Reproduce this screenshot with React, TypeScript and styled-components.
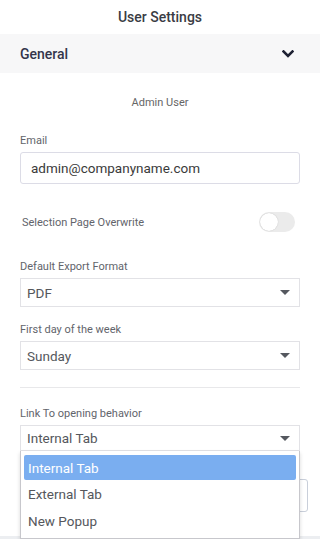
import React from 'react';
import styled, { createGlobalStyle } from 'styled-components';

const GlobalStyle = createGlobalStyle`
  html, body {
    margin: 0;
    padding: 0;
    background: #ffffff;
  }
  body {
    font-family: Roboto, "Liberation Sans", sans-serif;
    color: #333;
  }
`;

const Page = styled.div`
  width: 320px;
  height: 539px;
  display: flex;
  flex-direction: column;
  overflow: hidden;
  background: #ffffff;
`;

const TitleBar = styled.div`
  height: 34px;
  display: flex;
  align-items: center;
  justify-content: center;
  font-size: 14px;
  font-weight: 500;
  color: #3a3c44;
`;

const SectionHeader = styled.div`
  height: 39px;
  display: flex;
  align-items: center;
  justify-content: space-between;
  padding: 0 26px 0 20px;
  background: #f7f7f8;
  font-size: 14px;
  font-weight: 500;
  color: #33354a;
`;

const Body = styled.div`
  flex: 1;
  padding: 22px 20px 0;
  display: flex;
  flex-direction: column;
`;

const UserName = styled.div`
  text-align: center;
  font-size: 11px;
  line-height: 15px;
  color: #666;
  margin-bottom: 23px;
`;

const Field = styled.div<{ $gap?: number }>`
  display: flex;
  flex-direction: column;
  margin-bottom: ${(p) => p.$gap ?? 0}px;
  position: relative;
`;

const Label = styled.div`
  font-size: 11px;
  line-height: 15px;
  color: #62646b;
  margin-bottom: 4px;
`;

const TextInput = styled.div`
  height: 32px;
  box-sizing: border-box;
  border: 1px solid #dcdce6;
  border-radius: 3px;
  padding: 0 10px;
  display: flex;
  align-items: center;
  font-size: 13.5px;
  color: #3a3a3a;
`;

const ToggleRow = styled.div`
  height: 20px;
  display: flex;
  align-items: center;
  justify-content: space-between;
  padding: 0 5px 0 2px;
  margin: 28px 0 27px;
  font-size: 11px;
  color: #62646b;
`;

const Toggle = styled.div`
  width: 36px;
  height: 20px;
  border-radius: 10px;
  background: #ebebeb;
  display: flex;
  align-items: center;
  padding: 0 1px;
  box-sizing: border-box;
`;

const Knob = styled.div`
  width: 18px;
  height: 18px;
  border-radius: 50%;
  background: #fff;
  box-shadow: 0 0 1px rgba(0, 0, 0, 0.25);
`;

const Select = styled.div<{ $h?: number }>`
  height: ${(p) => p.$h ?? 29}px;
  box-sizing: border-box;
  border: 1px solid #e2e2e6;
  padding: 0 8px 0 6px;
  display: flex;
  align-items: center;
  justify-content: space-between;
  font-size: 13.5px;
  color: #55575c;
`;

const Caret = styled.span`
  width: 0;
  height: 0;
  border-left: 5px solid transparent;
  border-right: 5px solid transparent;
  border-top: 5px solid #55585f;
  margin-right: 1px;
`;

const Divider = styled.div`
  height: 1px;
  background: #e8e8ea;
  margin: 17px 0 18px;
`;

const ButtonRow = styled.div`
  display: flex;
  justify-content: flex-end;
  margin: 28px -8px 0 0;
`;

const SaveButton = styled.div`
  width: 90px;
  height: 33px;
  box-sizing: border-box;
  border: 1px solid #c9cfda;
  border-radius: 3px;
  display: flex;
  align-items: center;
  justify-content: center;
  font-size: 13px;
  color: #444;
`;

const Footer = styled.div`
  height: 3px;
  background: #eceef1;
`;

const Menu = styled.div`
  position: absolute;
  top: 100%;
  left: 0;
  right: 0;
  background: #fff;
  border: 1px solid #c7c7cc;
  border-top: none;
  box-shadow: 0 2px 4px rgba(0, 0, 0, 0.15);
  padding: 4px 3px 4px;
  z-index: 5;
`;

const MenuItem = styled.div<{ $active?: boolean }>`
  height: ${(p) => (p.$active ? 25 : 27)}px;
  display: flex;
  align-items: center;
  padding: 0 4px;
  border-radius: 2px;
  font-size: 13.5px;
  background: ${(p) => (p.$active ? '#7aaef0' : 'transparent')};
  color: ${(p) => (p.$active ? '#ffffff' : '#55575c')};
`;

const Chevron = () => (
  <svg width="12" height="8" viewBox="0 0 12 8">
    <polyline points="1.5,1.5 6,6 10.5,1.5" fill="none" stroke="#1e2133" strokeWidth="2.6" strokeLinecap="square" />
  </svg>
);

const options = ['Internal Tab', 'External Tab', 'New Popup'];

export default function App() {
  return (
    <Page>
      <GlobalStyle />
      <TitleBar>User Settings</TitleBar>
      <SectionHeader>
        <span>General</span>
        <Chevron />
      </SectionHeader>
      <Body>
        <UserName>Admin User</UserName>
        <Field>
          <Label>Email</Label>
          <TextInput>admin@companyname.com</TextInput>
        </Field>
        <ToggleRow>
          <span>Selection Page Overwrite</span>
          <Toggle>
            <Knob />
          </Toggle>
        </ToggleRow>
        <Field $gap={15}>
          <Label>Default Export Format</Label>
          <Select>
            PDF
            <Caret />
          </Select>
        </Field>
        <Field>
          <Label>First day of the week</Label>
          <Select>
            Sunday
            <Caret />
          </Select>
        </Field>
        <Divider />
        <Field>
          <Label>Link To opening behavior</Label>
          <Select $h={26}>
            Internal Tab
            <Caret />
          </Select>
          <Menu>
            {options.map((o, i) => (
              <MenuItem key={o} $active={i === 0}>
                {o}
              </MenuItem>
            ))}
          </Menu>
        </Field>
        <ButtonRow>
          <SaveButton>Save</SaveButton>
        </ButtonRow>
      </Body>
      <Footer />
    </Page>
  );
}
